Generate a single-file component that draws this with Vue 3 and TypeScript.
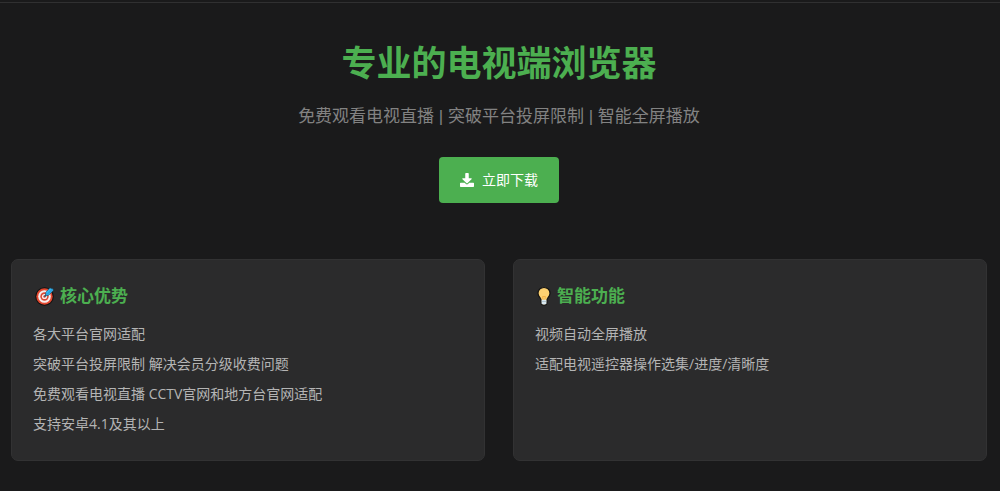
<script setup lang="ts">
interface Feature {
  icon: 'target' | 'bulb'
  title: string
  items: string[]
}

const features: Feature[] = [
  {
    icon: 'target',
    title: '核心优势',
    items: [
      '各大平台官网适配',
      '突破平台投屏限制 解决会员分级收费问题',
      '免费观看电视直播 CCTV官网和地方台官网适配',
      '支持安卓4.1及其以上',
    ],
  },
  {
    icon: 'bulb',
    title: '智能功能',
    items: ['视频自动全屏播放', '适配电视遥控器操作选集/进度/清晰度'],
  },
]
</script>

<template>
  <div class="page">
    <header class="topbar"></header>
    <main>
      <section class="hero">
        <h1>专业的电视端浏览器</h1>
        <p>免费观看电视直播 | 突破平台投屏限制 | 智能全屏播放</p>
        <button type="button" class="download">
          <svg viewBox="0 0 512 512" aria-hidden="true">
            <path
              fill="currentColor"
              d="M216 0h80c13.300 0 24 10.700 24 24v168h87.700c17.800 0 26.700 21.500 14.100 34.100L269.700 378.300c-7.500 7.500-19.800 7.500-27.300 0L90.100 226.100c-12.600-12.600-3.700-34.100 14.100-34.100H192V24c0-13.300 10.700-24 24-24zm296 376v112c0 13.300-10.700 24-24 24H24c-13.300 0-24-10.700-24-24V376c0-13.300 10.700-24 24-24h146.700l49 49c20.100 20.100 52.500 20.100 72.600 0l49-49H488c13.300 0 24 10.700 24 24z"
            />
          </svg>
          立即下载
        </button>
      </section>
      <section class="cards">
        <article v-for="f in features" :key="f.title" class="card">
          <h2>
            <svg v-if="f.icon === 'target'" class="target" viewBox="0 0 20 20" aria-hidden="true">
              <circle cx="9.500" cy="10.500" r="9.300" fill="#111" />
              <circle cx="9.500" cy="10.500" r="8.200" fill="#e2472f" />
              <circle cx="9.500" cy="10.500" r="6.300" fill="#f7eeee" />
              <circle cx="9.500" cy="10.500" r="4.200" fill="#dc4a36" />
              <circle cx="9.500" cy="10.500" r="2.600" fill="#f7eeee" />
              <circle cx="9.500" cy="10.500" r="1.200" fill="#dc4a36" />
              <path d="M9.500 10.500 14 6" stroke="#23547a" stroke-width="1.500" />
              <path
                d="m10.800 6.200 4.200-4.400 1.300.8 1.700.2.400 1.500-4.600 4.900-3.200.8z"
                fill="#35b5f1"
                stroke="#153547"
                stroke-width=".5"
              />
              <path d="m12 8.500 5-5" stroke="#1686cc" stroke-width=".8" />
            </svg>
            <svg v-else class="bulb" viewBox="0 0 16 20" aria-hidden="true">
              <path
                d="M8 1.500c-3.600 0-6 2.600-6 5.800 0 2.500 1.500 3.800 2.500 5.200.6.800.6 1.500.7 2.500v2q0 2 2.800 2t2.800-2v-2c.1-1 .1-1.700.7-2.500 1-1.400 2.500-2.700 2.500-5.200 0-3.200-2.400-5.800-6-5.800z"
                fill="#fcd071"
                stroke="#111"
                stroke-width="1.200"
              />
              <path d="M7.200 14 6.600 10.500h2.800L8.800 14" fill="none" stroke="#efa93c" stroke-width=".8" />
              <path d="M5.600 13.700h4.800v3.500q0 1.200-2.400 1.200t-2.400-1.200z" fill="#d9e8ef" />
              <path d="M5.600 15.500h4.800" stroke="#93aab5" stroke-width=".6" />
            </svg>
            {{ f.title }}
          </h2>
          <ul>
            <li v-for="item in f.items" :key="item">{{ item }}</li>
          </ul>
        </article>
      </section>
    </main>
  </div>
</template>

<style>
body {
  margin: 0;
  background: #1a1a1b;
}
</style>

<style scoped>
.page {
  font-family: 'Open Sans', 'Noto Sans CJK SC', sans-serif;
  color: #bbb;
}
.topbar {
  height: 2px;
  border-bottom: 1px solid #303031;
}
main {
  padding: 0 13px 28px 11px;
}
.hero {
  display: flex;
  flex-direction: column;
  align-items: center;
  padding: 32px 0 56px;
  text-align: center;
}
h1 {
  margin: 0;
  font-size: 35px;
  line-height: 56px;
  font-weight: 700;
  color: #4caf50;
}
.hero p {
  margin: 12px 0 26px;
  font-family: 'Liberation Sans', 'Noto Sans CJK SC', sans-serif;
  font-size: 17px;
  line-height: 28px;
  color: #828282;
}
.download {
  display: flex;
  align-items: center;
  gap: 8px;
  padding: 11px 21px;
  border: 0;
  border-radius: 4px;
  background: #4caf50;
  color: #fff;
  font-family: inherit;
  font-size: 14px;
  line-height: 24px;
}
.download svg {
  width: 14px;
  height: 14px;
}
.cards {
  display: grid;
  grid-template-columns: 1fr 1fr;
  gap: 28px;
}
.card {
  padding: 22px 21px 18px;
  border: 1px solid #323233;
  border-radius: 7px;
  background: #2b2b2c;
}
h2 {
  display: flex;
  align-items: center;
  gap: 5px;
  margin: 0 0 12px;
  font-size: 17px;
  line-height: 28px;
  font-weight: 700;
  color: #4caf50;
}
.target {
  width: 20px;
  height: 20px;
  margin-left: 2px;
}
.bulb {
  width: 16px;
  height: 20px;
  margin-left: 1px;
}
ul {
  margin: 0;
  padding: 0;
  list-style: none;
}
li {
  margin-bottom: 6px;
  font-size: 14px;
  line-height: 24px;
  color: #b4b4b4;
}
</style>
